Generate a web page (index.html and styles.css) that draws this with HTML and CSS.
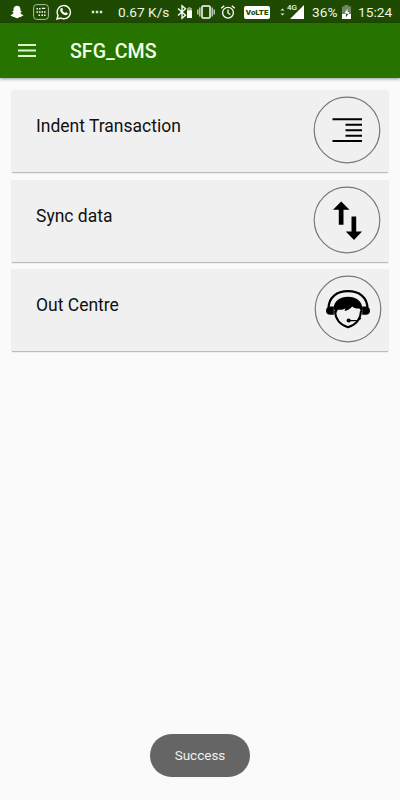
FILE: index.html
```html
<!DOCTYPE html>
<html lang="en">
<head>
    <meta charset="UTF-8">
    <meta name="viewport" content="width=device-width, initial-scale=1.0">
    <title>SFG_CMS</title>
    <link rel="stylesheet" href="styles.css">
</head>
<body>
    <div class="status-bar">
        <svg class="snap" width="14" height="14" viewBox="0 0 14 14">
            <path fill="#fff" d="M7 .8c2.200 0 3.500 1.500 3.500 3.600v1.500c.6 0 1.200.1 1.200.5s-.8.7-1.200 1c.4 1.300 1.500 2.200 2.900 2.600 0 .8-1 1-1.900 1.200-.1.500-.2.700-.5.700-1.300-.1-1.700.2-2.500.8-.9.600-2.100.6-3 0-.8-.6-1.200-.9-2.500-.8-.3 0-.4-.2-.5-.7C1.600 11 .6 10.800.6 10 2 9.600 3.100 8.700 3.500 7.400c-.4-.3-1.200-.6-1.200-1s.6-.5 1.200-.5V4.400C3.500 2.300 4.800.8 7 .8z"/>
        </svg>
        <svg class="keypad" width="16" height="16" viewBox="0 0 16 16">
            <rect x=".6" y=".6" width="14.800" height="14.800" rx="3" fill="none" stroke="#a9c49b"/>
            <path fill="#fff" d="M3.500 4H5v1.500H3.500zM6 4h1.500v1.500H6zM8.800 3.700h3.400V5H8.800zM3.500 7.200H5v1.500H3.500zM6 7.200h1.500v1.500H6zM8.500 7.200H10v1.500H8.500zM11 7.200h1.500v1.500H11zM5.500 10.500H7V12H5.500zM8.500 10.500H10V12H8.500zM11 10.500h1.500V12H11z"/>
        </svg>
        <svg class="whatsapp" width="16" height="16" viewBox="0 0 16 16">
            <path fill="none" stroke="#fff" stroke-width="1.400" d="M1 15l1-3.700A6.600 6.600 0 1 1 4.700 14z"/>
            <path fill="#fff" d="M5.400 4.100c.4-.3.800-.2 1 .2l.5 1.200c.1.400-.4.800-.6 1.100.6 1.200 1.500 2 2.700 2.500.4-.3.700-1 1.200-.8l1.300.7c.4.200.2 1-.1 1.400-.8 1-2 .9-3.400.3-2-.9-3.400-2.600-3.800-4.200-.2-1 .4-1.900 1.200-2.400z"/>
        </svg>
        <svg class="more" width="12" height="4" viewBox="0 0 12 4">
            <path fill="#dfe8da" d="M.8.800h2.400v2.400H.8zM4.800.800h2.400v2.400H4.800zM8.800.800h2.400v2.400H8.800z"/>
        </svg>
        <span class="speed">0.67 K/s</span>
        <svg class="bluetooth" width="16" height="16" viewBox="0 0 16 16">
            <path fill="none" stroke="#fff" stroke-width="1.300" d="M1 4.500l7.500 6.700L5 14.300V1.700l3.500 3.100L1 11.500"/>
            <path fill="#8fa986" d="M10 4h1.500V3h2v1H15v3h-5z"/>
            <path fill="#fff" d="M10 6.500h5V14h-5z"/>
        </svg>
        <svg class="vibrate" width="18" height="16" viewBox="0 0 18 16">
            <rect x="5" y="2" width="8" height="12" rx="1" fill="none" stroke="#fff" stroke-width="1.500"/>
            <path stroke="#b9cbb0" stroke-width="1.500" d="M2.800 3.500v9M15.200 3.500v9M.8 5.500v5M17.200 5.500v5"/>
        </svg>
        <svg class="alarm" width="16" height="16" viewBox="0 0 16 16">
            <circle cx="8" cy="8.700" r="5.400" fill="none" stroke="#fff" stroke-width="1.300"/>
            <path fill="none" stroke="#fff" stroke-width="1.300" d="M8 5.500v3.500l2.300 1.500M1.200 4.300l3-2.600M14.800 4.300l-3-2.600"/>
        </svg>
        <span class="volte">V<i>o</i>LTE</span>
        <svg class="transfer" width="5" height="8" viewBox="0 0 5 8">
            <path fill="#dfe8da" d="M.5 2.500l2-2 2 2zM.5 5.500l2 2 2-2z"/>
        </svg>
        <span class="network">4G</span>
        <svg class="signal" width="14" height="14" viewBox="0 0 14 14">
            <path fill="#fff" d="M14 0v14H0z"/>
        </svg>
        <span class="percent">36%</span>
        <svg class="battery" width="9" height="14" viewBox="0 0 9 14">
            <path fill="#71866a" d="M0 1.500h2.500V0h4v1.500H9V14H0z"/>
            <path fill="#fff" d="M0 9h9v5H0z"/>
            <path fill="#fff" d="M5.500 3.800L2.500 8.300h2V9h2l.8-1.800H5.500z"/>
            <path fill="#1f4a07" d="M4 9h2.300L3.900 12.300z"/>
        </svg>
        <span class="clock">15:24</span>
    </div>
    <header>
        <svg class="menu" width="18" height="13" viewBox="0 0 18 13">
            <path stroke="#dcf5cb" stroke-width="1.900" d="M0 1h18M0 6.500h18M0 12h18"/>
        </svg>
        <h1>SFG_CMS</h1>
    </header>
    <main class="content">
        <a class="card">
            <span>Indent Transaction</span>
            <svg width="68" height="68" viewBox="0 0 68 68">
                <circle cx="34" cy="34" r="32.800"/>
                <path stroke="#000" stroke-width="1.900" d="M19.500 23.300h29.500M32.500 28.700H49M32.500 34.200H49M32.500 39.700H49M19.500 45H49"/>
            </svg>
        </a>
        <a class="card">
            <span>Sync data</span>
            <svg width="68" height="68" viewBox="0 0 68 68">
                <circle cx="34" cy="34" r="32.800"/>
                <path d="M28.200 15.500l8.300 8.200h-6v15h-4.700v-15h-5.800zM38.500 30.500h4.700v15h5.900L41 54l-8.200-8.500h5.700z"/>
            </svg>
        </a>
        <a class="card out-centre">
            <span>Out Centre</span>
            <svg width="68" height="68" viewBox="0 0 68 68">
                <circle cx="34" cy="34" r="32.800"/>
                <path fill="none" stroke="#000" stroke-width="2.200" d="M14.500 34C14.500 22 23 16.200 34 16.200S53.500 22 53.500 34"/>
                <path d="M16.500 31.500h3.300v8.300h-3.300q-4.500-.3-4.500-4.100t4.500-4.200zM51.500 31.500h-3.300v8.300h3.300q4.500-.3 4.500-4.100t-4.500-4.200z"/>
                <path d="M19.500 33.500C20 26 26 21.700 34 21.700S48 26 48.500 33.500l-.8 3.500c-1.200-.8-1.400-2.300-2.200-3.600-2.600.5-5.200-.2-7.300-2-2.200 2.500-4.700 3.900-7.700 4.600l1-2.800c-2 1.500-4.400 1.800-7.600 1.500l-1.800 3.500z"/>
                <path fill="none" stroke="#000" stroke-width="2" d="M21 36c.3 7 4.500 13.500 13 16.300C42.500 49.500 46.700 43 47 36"/>
                <path fill="none" stroke="#000" stroke-width="1.200" d="M34 45.700h9.500l3.500-2.500"/>
                <circle class="mic" cx="34.700" cy="45.500" r="2.100"/>
            </svg>
        </a>
    </main>
    <div class="toast">Success</div>
</body>
</html>
```

FILE: styles.css
```css
body {
    font-family: Roboto, "Liberation Sans", sans-serif;
    background-color: #fafafa;
    margin: 0;
    height: 800px;
    display: flex;
    flex-direction: column;
    overflow: hidden;
}
svg {
    display: block;
    flex: none;
}
.status-bar {
    height: 23px;
    flex: none;
    box-sizing: border-box;
    padding-left: 10px;
    padding-top: 1px;
    display: flex;
    align-items: center;
    background-color: #1f4a02;
    color: #edf5e8;
    font-size: 13.7px;
    line-height: 22px;
    white-space: nowrap;
}
.status-bar span {
    flex: none;
}
.keypad {
    margin-left: 9px;
}
.whatsapp {
    margin-left: 7px;
}
.more {
    margin-left: 19px;
}
.speed {
    width: 59px;
    margin-left: 15px;
}
.vibrate {
    margin-left: 4px;
}
.alarm {
    margin-left: 5px;
}
.status-bar .volte {
    width: 26px;
    height: 13px;
    margin-left: 8px;
    border-radius: 2px;
    background-color: #fff;
    color: #1f4a02;
    font-size: 8px;
    font-weight: 900;
    line-height: 14px;
    text-align: center;
}
.transfer {
    margin-left: 10px;
}
.status-bar .network {
    width: 9px;
    height: 18px;
    margin-left: 2px;
    font-size: 8px;
    font-weight: 500;
    line-height: 10px;
}
.signal {
    margin-left: -6px;
}
.percent {
    width: 30px;
    margin-left: 8px;
}
.clock {
    margin-left: 7px;
}
header {
    height: 55px;
    flex: none;
    display: flex;
    align-items: center;
    padding-left: 18px;
    background-color: #277300;
    box-shadow: 0 1px 3px rgba(0, 0, 0, 0.4);
}
header h1 {
    margin: 2px 0 0 34px;
    color: #f2ffe9;
    font-size: 19.6px;
    font-weight: 500;
}
.menu {
    margin-bottom: 1px;
}
.content {
    flex: 1;
    display: flex;
    flex-direction: column;
    gap: 7.500px;
    padding: 12px 12px 0;
}
.card {
    height: 82px;
    box-sizing: border-box;
    display: flex;
    justify-content: space-between;
    padding: 6px 7px 0 24px;
    background-color: #f0f0f0;
    box-shadow: 0 1px 1px rgba(0, 0, 0, 0.25);
    color: #111;
    font-size: 17.5px;
}
.card span {
    margin-top: 19px;
    line-height: 22px;
}
.card circle {
    fill: none;
    stroke: #777;
    stroke-width: 1.2;
}
.card .mic {
    fill: #000;
    stroke: none;
}
.out-centre {
    padding-right: 6px;
}
.toast {
    width: 100px;
    height: 43px;
    flex: none;
    align-self: center;
    margin-bottom: 23.5px;
    border-radius: 22px;
    background-color: #656565;
    color: #f0f0f0;
    font-size: 13.5px;
    line-height: 43px;
    text-align: center;
}
```
